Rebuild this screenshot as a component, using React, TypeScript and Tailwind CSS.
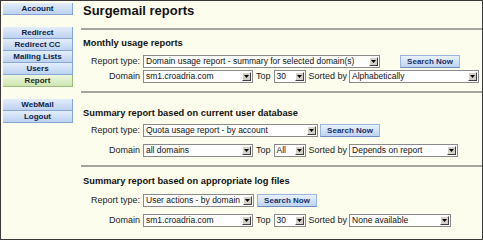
import React from "react";

const NavButton = ({ label, active }: { label: string; active?: boolean }) => (
  <div
    className={
      active
        ? "h-[12px] w-[70px] flex items-center justify-center border-b border-r border-[#9cbc7c] bg-gradient-to-b from-[#eef7e0] to-[#cfe5b0] text-[8px] font-bold leading-none text-[#1c2a10]"
        : "h-[12px] w-[70px] flex items-center justify-center border-b border-r border-[#86a6d6] bg-gradient-to-b from-[#e4eefb] to-[#bcd2f0] text-[8px] font-bold leading-none text-[#0c1c48]"
    }
  >
    {label}
  </div>
);

const Select = ({ w, value }: { w: string; value: string }) => (
  <div className={`${w} shrink-0 h-[13px] flex items-center bg-white border border-[#8a8a8a]`}>
    <span className="flex-1 pl-[2px] text-[8.5px] leading-none text-[#111] whitespace-nowrap overflow-hidden">
      {value}
    </span>
    <span className="w-[9px] h-[9px] shrink-0 mr-[1px] flex items-center justify-center bg-[#d4d0c8] border border-t-white border-l-white border-r-[#404040] border-b-[#404040]">
      <svg width="5" height="3" viewBox="0 0 5 3">
        <path d="M0 0h5L2.5 3z" fill="#000" />
      </svg>
    </span>
  </div>
);

const SearchButton = ({ className }: { className: string }) => (
  <div
    className={`${className} shrink-0 w-[60px] h-[13px] flex items-center justify-center border border-[#9ab5de] border-b-[#6f8fc0] bg-gradient-to-b from-[#eaf2fc] to-[#bdd3f1] text-[8px] font-bold leading-none text-[#17306a] whitespace-nowrap`}
  >
    Search Now
  </div>
);

const DomainRow = ({ topValue, sortW, sortValue, domain }: { topValue: string; sortW: string; sortValue: string; domain: string }) => (
  <div className="flex items-center h-[13px] text-[9px] text-[#222] whitespace-nowrap">
    <span className="w-[57px] shrink-0 text-right">Domain</span>
    <div className="ml-[3px]">
      <Select w="w-[110px]" value={domain} />
    </div>
    <span className="ml-[3px] shrink-0">Top</span>
    <div className="ml-[3px]">
      <Select w="w-[32px]" value={topValue} />
    </div>
    <span className="ml-[3px] shrink-0">Sorted by</span>
    <div className="ml-[2px]">
      <Select w={sortW} value={sortValue} />
    </div>
  </div>
);

export default function App() {
  return (
    <div className="w-[483px] h-[240px] flex bg-[#fdfdee] border border-[#3a3a3a] font-['Liberation_Sans',Arial,sans-serif] overflow-hidden">
      <div className="w-[80px] shrink-0 pl-[2px] pt-[2px] flex flex-col">
        <NavButton label="Account" />
        <div className="mt-[12px] flex flex-col">
          <NavButton label="Redirect" />
          <NavButton label="Redirect CC" />
          <NavButton label="Mailing Lists" />
          <NavButton label="Users" />
          <NavButton label="Report" active />
        </div>
        <div className="mt-[12px] flex flex-col">
          <NavButton label="WebMail" />
          <NavButton label="Logout" />
        </div>
      </div>

      <div className="flex-1 min-w-0 flex flex-col">
        <div className="h-[27px] pl-[2px] pt-[3px] text-[13px] font-bold leading-[14px] text-[#111]">
          Surgemail reports
        </div>
        <div className="border-t-2 border-[#a6a6a0]" />

        <div className="pl-[2px] pt-[7px] pb-[8px]">
          <div className="text-[9.3px] font-bold leading-[12px] text-[#111]">Monthly usage reports</div>
          <div className="mt-[6px] flex items-center h-[13px] text-[9px] text-[#222] whitespace-nowrap">
            <span className="w-[57px] shrink-0 text-right">Report type:</span>
            <div className="ml-[3px]">
              <Select w="w-[237px]" value="Domain usage report - summary for selected domain(s)" />
            </div>
            <SearchButton className="ml-[20px]" />
          </div>
          <div className="mt-[2px]">
            <DomainRow domain="sm1.croadria.com" topValue="30" sortW="w-[130px]" sortValue="Alphabetically" />
          </div>
        </div>
        <div className="border-t-2 border-[#a6a6a0]" />

        <div className="pl-[2px] pt-[14px] pb-[8px]">
          <div className="text-[9.3px] font-bold leading-[12px] text-[#111]">
            Summary report based on current user database
          </div>
          <div className="mt-[5px] flex items-center h-[13px] text-[9px] text-[#222] whitespace-nowrap">
            <span className="w-[57px] shrink-0 text-right">Report type:</span>
            <div className="ml-[3px]">
              <Select w="w-[175px]" value="Quota usage report - by account" />
            </div>
            <SearchButton className="ml-[2px]" />
          </div>
          <div className="mt-[7px]">
            <DomainRow domain="all domains" topValue="All" sortW="w-[109px]" sortValue="Depends on report" />
          </div>
        </div>
        <div className="border-t-2 border-[#a6a6a0]" />

        <div className="pl-[2px] pt-[8px]">
          <div className="text-[9.3px] font-bold leading-[12px] text-[#111]">
            Summary report based on appropriate log files
          </div>
          <div className="mt-[7px] flex items-center h-[13px] text-[9px] text-[#222] whitespace-nowrap">
            <span className="w-[57px] shrink-0 text-right">Report type:</span>
            <div className="ml-[3px]">
              <Select w="w-[111px]" value="User actions - by domain" />
            </div>
            <SearchButton className="ml-[3px]" />
          </div>
          <div className="mt-[7px]">
            <DomainRow domain="sm1.croadria.com" topValue="30" sortW="w-[102px]" sortValue="None available" />
          </div>
        </div>
      </div>
    </div>
  );
}
